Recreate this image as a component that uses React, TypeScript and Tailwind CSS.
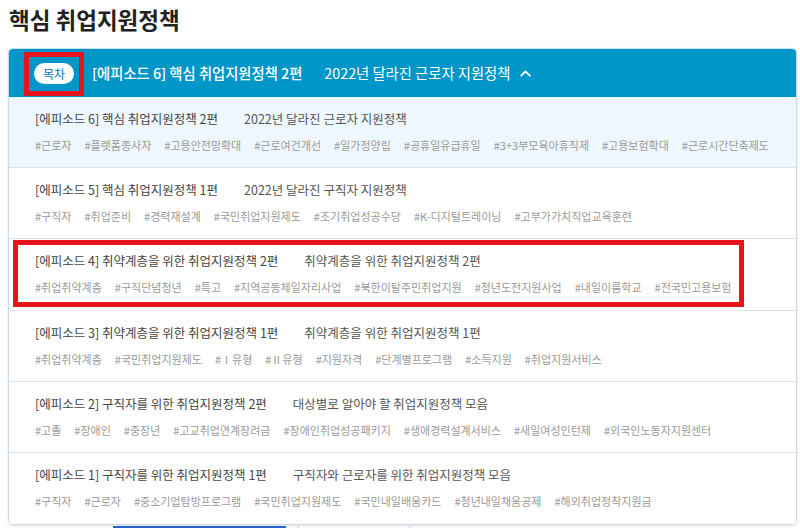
import { ChevronUp } from "lucide-react";

// 에피소드 목록
interface Episode {
  title: string;
  sub: string;
  tags: string[];
}

const episodes: Episode[] = [
  {
    title: "[에피소드 6] 핵심 취업지원정책 2편",
    sub: "2022년 달라진 근로자 지원정책",
    tags: ["#근로자", "#플랫폼종사자", "#고용안전망확대", "#근로여건개선", "#일가정양립", "#공휴일유급휴일", "#3+3부모육아휴직제", "#고용보험확대", "#근로시간단축제도"],
  },
  {
    title: "[에피소드 5] 핵심 취업지원정책 1편",
    sub: "2022년 달라진 구직자 지원정책",
    tags: ["#구직자", "#취업준비", "#경력재설계", "#국민취업지원제도", "#조기취업성공수당", "#K-디지털트레이닝", "#고부가가치직업교육훈련"],
  },
  {
    title: "[에피소드 4] 취약계층을 위한 취업지원정책 2편",
    sub: "취약계층을 위한 취업지원정책 2편",
    tags: ["#취업취약계층", "#구직단념청년", "#특고", "#지역공동체일자리사업", "#북한이탈주민취업지원", "#청년도전지원사업", "#내일이룸학교", "#전국민고용보험"],
  },
  {
    title: "[에피소드 3] 취약계층을 위한 취업지원정책 1편",
    sub: "취약계층을 위한 취업지원정책 1편",
    tags: ["#취업취약계층", "#국민취업지원제도", "#Ⅰ유형", "#Ⅱ유형", "#지원자격", "#단계별프로그램", "#소득지원", "#취업지원서비스"],
  },
  {
    title: "[에피소드 2] 구직자를 위한 취업지원정책 2편",
    sub: "대상별로 알아야 할 취업지원정책 모음",
    tags: ["#고졸", "#장애인", "#중장년", "#고교취업연계장려금", "#장애인취업성공패키지", "#생애경력설계서비스", "#새일여성인턴제", "#외국인노동자지원센터"],
  },
  {
    title: "[에피소드 1] 구직자를 위한 취업지원정책 1편",
    sub: "구직자와 근로자를 위한 취업지원정책 모음",
    tags: ["#구직자", "#근로자", "#중소기업탐방프로그램", "#국민취업지원제도", "#국민내일배움카드", "#청년내일채움공제", "#해외취업정착지원금"],
  },
];

const EpisodeRow = ({ ep, idx }: { ep: Episode; idx: number }) => {
  return (
    <div
      className={
        "relative h-[71.2px] px-[26px] pt-[14px] border-b border-[#dfe3e8] last:border-b-0 " +
        (idx === 0 ? "bg-[#eff7fe]" : "bg-white")
      }
    >
      <div className="flex items-center h-[16px] text-[12.5px] leading-[16px]">
        <span className="text-[#444]">{ep.title}</span>
        <span className="ml-[26px] text-[#555]">{ep.sub}</span>
      </div>
      <div className="mt-[11px] flex items-center gap-[13px] h-[14px] text-[11px] leading-[14px] text-[#9a9a9a]">
        {ep.tags.map((t) => (
          <span key={t}>{t}</span>
        ))}
      </div>
      {idx === 2 && (
        <div className="absolute top-[1px] left-[4px] w-[731px] h-[67px] border-[5px] border-[#e8141c] pointer-events-none" />
      )}
    </div>
  );
}

export default function App() {
  return (
    <div
      className="w-[800px] h-[528px] overflow-hidden bg-white"
      style={{ fontFamily: '"Noto Sans CJK KR", "Noto Sans", sans-serif' }}
    >
      <h1 className="pl-[9px] pt-[4px] h-[48px] text-[22.5px] leading-[30px] font-semibold text-[#222]">
        핵심 취업지원정책
      </h1>

      <div className="mx-[8px] w-[789px] rounded-[5px] border border-[#c9dcee] overflow-hidden shadow-[0_1px_3px_rgba(0,0,0,0.12)]">
        <div className="relative h-[48px] bg-[#0096c8] flex items-center pl-[25px] text-white">
          <span className="w-[40px] h-[21px] rounded-full bg-white text-[#0a73b8] text-[12px] leading-[21px] text-center">
            목차
          </span>
          <span className="ml-[18px] text-[14.3px] font-medium">[에피소드 6] 핵심 취업지원정책 2편</span>
          <span className="ml-[22px] text-[14.3px]">2022년 달라진 근로자 지원정책</span>
          <ChevronUp size={17} strokeWidth={2.6} className="ml-[7px]" />
          <div className="absolute top-[3px] left-[15px] w-[60px] h-[44px] border-[5px] border-[#e8141c]" />
        </div>

        {episodes.map((ep, i) => (
          <EpisodeRow key={ep.title} ep={ep} idx={i} />
        ))}
      </div>

      <div className="flex mt-[1px] h-[4px]">
        <div className="ml-[113px] w-[173px] bg-[#2a5fc7]" />
        <div className="ml-[12px] w-[112px] border-l border-r border-[#ccc]" />
      </div>
    </div>
  );
}
